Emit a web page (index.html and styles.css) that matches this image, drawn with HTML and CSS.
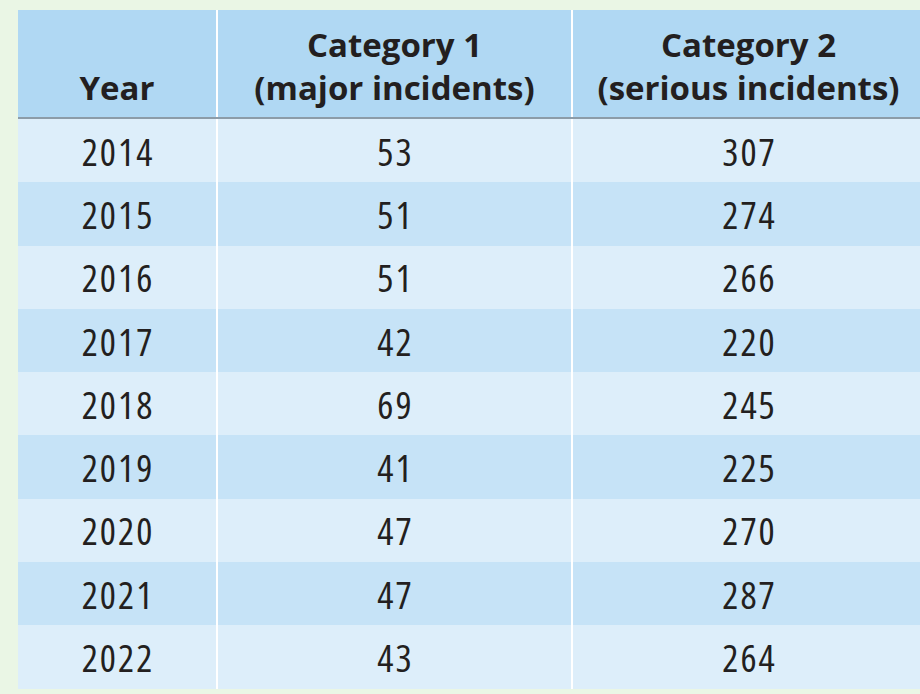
FILE: index.html
```html
<!DOCTYPE html>
<html lang="en">
<head>
    <meta charset="UTF-8">
    <meta name="viewport" content="width=device-width, initial-scale=1.0">
    <title>Incidents by year</title>
    <link rel="stylesheet" href="styles.css">
</head>
<body>
    <div class="wrap">
        <table class="incidents">
            <thead>
                <tr>
                    <th class="col-year">Year</th>
                    <th class="col-cat">Category 1<br>(major incidents)</th>
                    <th class="col-cat">Category 2<br>(serious incidents)</th>
                </tr>
            </thead>
            <tbody>
                <tr><td>2014</td><td>53</td><td>307</td></tr>
                <tr><td>2015</td><td>51</td><td>274</td></tr>
                <tr><td>2016</td><td>51</td><td>266</td></tr>
                <tr><td>2017</td><td>42</td><td>220</td></tr>
                <tr><td>2018</td><td>69</td><td>245</td></tr>
                <tr><td>2019</td><td>41</td><td>225</td></tr>
                <tr><td>2020</td><td>47</td><td>270</td></tr>
                <tr><td>2021</td><td>47</td><td>287</td></tr>
                <tr><td>2022</td><td>43</td><td>264</td></tr>
            </tbody>
        </table>
    </div>
</body>
</html>
```

FILE: styles.css
```css
body {
    margin: 0;
    padding: 0;
    background-color: #eaf6e5;
    font-family: "Open Sans", "Noto Sans", sans-serif;
    color: #231f20;
    overflow: hidden;
}
.wrap {
    padding: 10px 0 0 18px;
    width: 920px;
    height: 694px;
    box-sizing: border-box;
    overflow: hidden;
}
.incidents {
    border-collapse: collapse;
    table-layout: fixed;
    width: 906px;
}
.incidents th,
.incidents td {
    padding: 0;
    text-align: center;
}
.incidents th + th,
.incidents td + td {
    border-left: 2px solid #ffffff;
}
.incidents th {
    background-color: #b0d8f3;
    height: 108px;
    vertical-align: bottom;
    padding-bottom: 8px;
    box-sizing: border-box;
    font-size: 33px;
    font-weight: 700;
    line-height: 43px;
    border-bottom: 2px solid #8c9ca8;
}
.incidents .col-year {
    width: 199px;
}
.incidents th:nth-child(2) {
    width: 355px;
}
.incidents td {
    height: 63.3px;
    font-size: 38px;
    font-weight: 400;
    font-stretch: condensed;
    letter-spacing: 2px;
    text-indent: 2px;
}
.incidents tbody tr:nth-child(odd) td {
    background-color: #ddeefa;
}
.incidents tbody tr:nth-child(even) td {
    background-color: #c6e3f7;
}
```
